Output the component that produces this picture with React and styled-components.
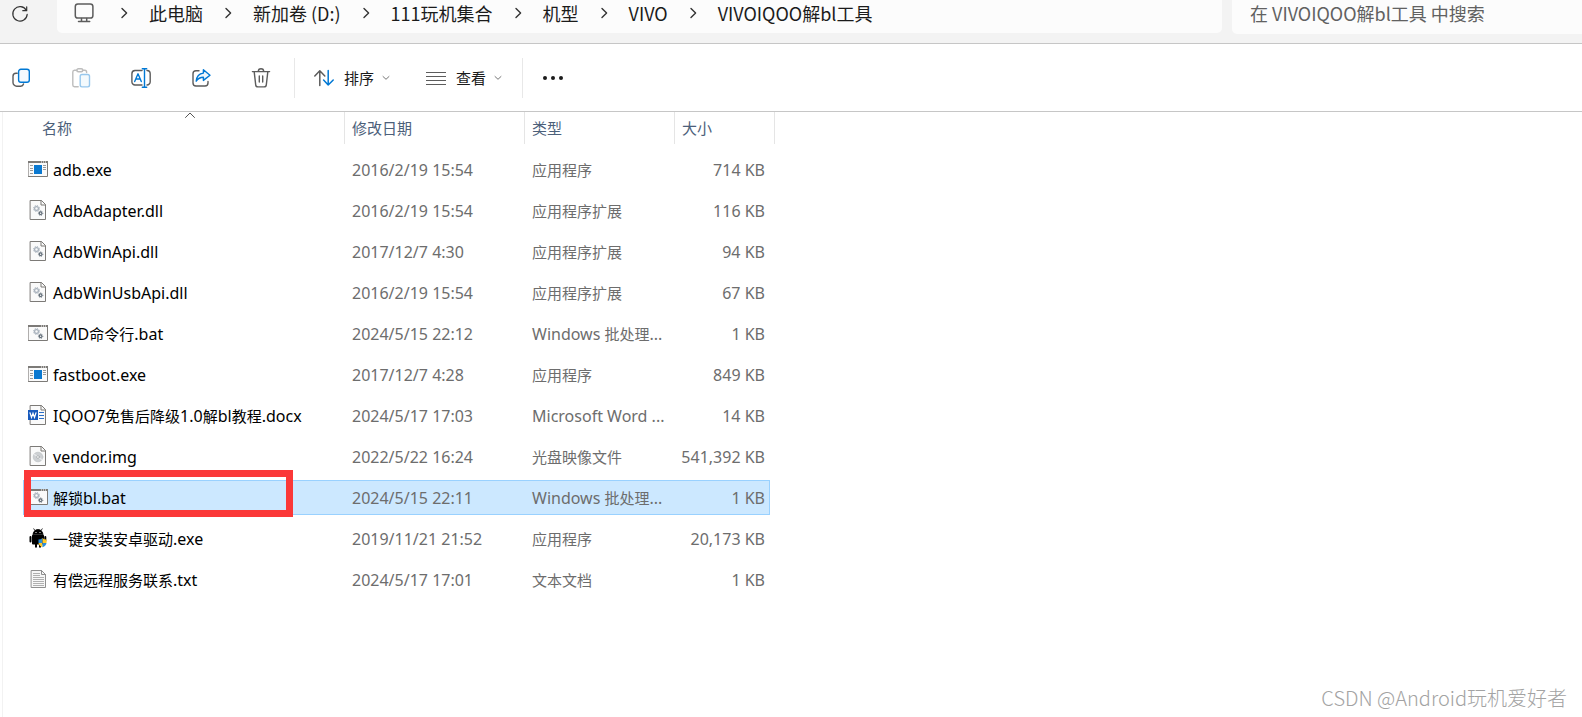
import React from "react";
import styled, { createGlobalStyle } from "styled-components";

const GlobalStyle = createGlobalStyle`
  *, *::before, *::after { box-sizing: border-box; }
  body {
    margin: 0;
    background: #ffffff;
    color: #000000;
    font-family: "Noto Sans", "Noto Sans CJK SC", sans-serif;
    font-size: 15px;
  }
  button, input { font: inherit; color: inherit; margin: 0; }
  svg { display: block; flex: none; }
`;

const Window = styled.div`
  display: flex;
  flex-direction: column;
  min-height: 100vh;
`;

const AddressRow = styled.header`
  display: flex;
  align-items: flex-start;
  gap: 10px;
  height: 44px;
  background: #f3f3f3;
  border-bottom: 1px solid #c6c6c6;
  font-family: "Noto Sans CJK SC", sans-serif;
  font-size: 18px;
`;

const PlainButton = styled.button`
  display: flex;
  align-items: center;
  justify-content: center;
  padding: 0;
  border: 0;
  background: transparent;
`;

const RefreshButton = styled(PlainButton)`
  width: 39px;
  height: 27px;
  margin-right: 8px;
`;

const AddressBox = styled.nav`
  flex: 1;
  display: flex;
  align-items: center;
  gap: 21px;
  height: 33px;
  padding: 0 17px 8px;
  border-radius: 0 0 5px 5px;
  background: #fcfcfc;
`;

const Device = styled.span`
  margin-right: 5px;
`;

const Crumb = styled.a`
  color: #1b1b1b;
  line-height: 24px;
  text-decoration: none;
  white-space: nowrap;
`;

const SearchBox = styled.input`
  width: 350px;
  height: 34px;
  padding: 0 18px 8px;
  border: 0;
  border-radius: 0 0 0 5px;
  background: #fcfcfc;
  outline: 0;
  &::placeholder { color: #616161; opacity: 1; }
`;

const Toolbar = styled.div`
  display: flex;
  align-items: center;
  height: 68px;
  padding-left: 1px;
  border-bottom: 1px solid #c6c6c6;
`;

const ToolGroup = styled.div`
  display: flex;
  gap: 20px;
`;

const ToolButton = styled(PlainButton)`
  width: 40px;
  height: 40px;
  opacity: ${(p) => (p.$faded ? 0.4 : 1)};
`;

const MenuButton = styled(PlainButton)`
  gap: 8px;
  height: 40px;
  color: #1b1b1b;
`;

const MenuLabel = styled.span`
  margin-left: 2px;
`;

const MenuGroup = styled.div`
  display: flex;
  gap: 36px;
  padding: 0 20px 0 19px;
`;

const Divider = styled.span`
  width: 1px;
  height: 40px;
  background: #e8e8e8;
  margin-left: ${(p) => p.$gap || 0}px;
`;

const Content = styled.main`
  flex: 1;
  display: flex;
  flex-direction: column;
  justify-content: space-between;
  margin-left: 2px;
  border-left: 1px solid #f2f2f2;
`;

const FileTable = styled.table`
  table-layout: fixed;
  width: 747px;
  margin: -6px 0 0 20px;
  border-collapse: separate;
  border-spacing: 0 6px;
  line-height: 20px;
`;

const Column = styled.col`
  width: ${(p) => p.$width}px;
`;

const HeadCell = styled.th`
  height: 34px;
  padding: 0;
  font-weight: 400;
  text-align: left;
  vertical-align: top;
`;

const HeadLabel = styled.div`
  position: relative;
  height: 32px;
  margin-left: ${(p) => (p.$first ? 12 : 0)}px;
  margin-right: ${(p) => (p.$last ? -5 : 0)}px;
  padding: 6px 7px 0;
  border-right: 1px solid #e5e5e5;
  color: #4c607a;
`;

const SortMark = styled.span`
  position: absolute;
  top: 0;
  left: 50%;
  transform: translateX(-50%);
`;

const Cell = styled.td`
  height: 35px;
  padding: 0 ${(p) => (p.$right ? 5 : 7)}px;
  color: #6d6d6d;
  font-size: 16px;
  text-align: ${(p) => (p.$right ? "right" : "left")};
  white-space: nowrap;
`;

const NameCell = styled(Cell)`
  position: relative;
  padding: 0 5px 2px;
  color: #000000;
`;

const Row = styled.tr`
  ${(p) =>
    p.$selected &&
    `
    td { background: #cce8ff; box-shadow: inset 0 1px #99d1ff, inset 0 -1px #99d1ff; }
    td:first-child { box-shadow: inset 0 1px #99d1ff, inset 0 -1px #99d1ff, inset 1px 0 #99d1ff; }
    td:last-child { box-shadow: inset 0 1px #99d1ff, inset 0 -1px #99d1ff, inset -1px 0 #99d1ff; }
  `}
`;

const FileName = styled.div`
  display: flex;
  align-items: center;
  gap: 5px;
`;

const FileLabel = styled.span`
  padding-top: 2px;
`;

const Han = styled.span`
  font-size: 15px;
`;

const RedFrame = styled.span`
  position: absolute;
  top: -10px;
  left: 1px;
  width: 269px;
  height: 47px;
  border: 7px solid #fb3838;
  pointer-events: none;
`;

const Watermark = styled.footer`
  padding: 0 15px 4px;
  color: #a3a3a3;
  font-family: "Noto Sans CJK SC", sans-serif;
  font-size: 20px;
  font-weight: 300;
  line-height: 30px;
  text-align: right;
`;

const GREY = "#5c5c5c";
const BLUE = "#0078d4";

function Icon({ children, size = 20, height, ...rest }) {
  return (
    <svg
      width={size}
      height={height || size}
      viewBox={`0 0 ${size} ${height || size}`}
      fill="none"
      strokeLinecap="round"
      strokeLinejoin="round"
      aria-hidden="true"
      {...rest}
    >
      {children}
    </svg>
  );
}

const RefreshIcon = () => (
  <Icon size={18} stroke="#333" strokeWidth="1.2">
    <path d="M15.2 5.2A7.2 7.2 0 1 0 16.2 9.4M15.7 1.8v3.9h-3.9" />
  </Icon>
);

const MonitorIcon = () => (
  <Icon stroke={GREY} strokeWidth="1.5">
    <rect x="1.3" y="1" width="17.6" height="14" rx="2.6" />
    <path d="M7.5 15.4v3M12.7 15.4v3M4.5 18.6h11.2" />
  </Icon>
);

const CrumbArrow = () => (
  <Icon size={8} height={12} stroke="#333" strokeWidth="1.4">
    <path d="M2 1.5 6.6 6 2 10.5" />
  </Icon>
);

const SmallCaret = () => (
  <Icon size={8} stroke="#777" strokeWidth="1">
    <path d="M1 2.5 4 5.3 7 2.5" />
  </Icon>
);

const CopyIcon = () => (
  <Icon strokeWidth="1.4">
    <path d="M6.2 5.2H5A3 3 0 0 0 2 8.2v6.3A3.7 3.7 0 0 0 5.7 18.2h4A3 3 0 0 0 12.500 16" stroke={GREY} />
    <rect x="7.6" y="1.300" width="10.700" height="13" rx="2.300" stroke={BLUE} fill="#f3f9fe" />
  </Icon>
);

const PasteIcon = () => (
  <Icon strokeWidth="1.4">
    <path d="M6 2.200H3.500A1.800 1.800 0 0 0 1.800 4v13a1.800 1.800 0 0 0 1.700 1.800h3.700M11.500 2.200h2.300A1.800 1.800 0 0 1 15.600 4v.6" stroke={GREY} />
    <rect x="5.800" y=".8" width="6" height="3" rx="1.500" stroke={GREY} />
    <rect x="9.200" y="6.500" width="9.300" height="12.400" rx="1.800" stroke={BLUE} fill="#e6f3fc" />
  </Icon>
);

const RenameIcon = () => (
  <Icon strokeWidth="1.4">
    <path d="M11 2.500H4A3.200 3.200 0 0 0 .9 5.700v8A3.200 3.200 0 0 0 4 17h7M16 2.500a3.200 3.200 0 0 1 3.200 3.200v8A3.200 3.200 0 0 1 16 17" stroke={GREY} />
    <path d="M13.500.8v18.400M11.300.8h4.400M11.300 19.200h4.400M3.700 13.500 7 5.800l3.300 7.700M4.800 11h4.400" stroke={BLUE} />
  </Icon>
);

const ShareIcon = () => (
  <Icon strokeWidth="1.4">
    <path d="M8 2.800H5A3 3 0 0 0 2 5.800V15a3 3 0 0 0 3 3h9a3 3 0 0 0 3-3v-1.500" stroke={GREY} />
    <path d="M12.400 1.800 19 7.200l-6.600 5.200V9.300C9 9.300 7 10.500 5.200 13.200 5.600 8.500 8 5.500 12.400 5.100Z" stroke={BLUE} fill="#eef7fd" />
  </Icon>
);

const TrashIcon = () => (
  <Icon stroke={GREY} strokeWidth="1.4">
    <path d="M1.400 3.600h17.200M7.300 3.400a2.700 2.700 0 0 1 5.400 0M3.200 3.800l1.500 13.100a2.200 2.200 0 0 0 2.200 2h6.200a2.200 2.200 0 0 0 2.200-2l1.500-13.100M8.300 8v6M11.700 8v6" />
  </Icon>
);

const SortIcon = () => (
  <Icon strokeWidth="1.500">
    <path d="M5.800 17.500V3M.8 8l5-5.200 5 5.200" stroke={GREY} />
    <path d="M14.200 2.500V17M9.600 12l4.600 5 5-5" stroke={BLUE} />
  </Icon>
);

const ViewIcon = () => (
  <Icon stroke={GREY} strokeWidth="1.200" strokeLinecap="butt">
    <path d="M0 4.500h20M0 8.500h20M0 12.500h20M0 16.500h20" />
  </Icon>
);

const MoreIcon = () => (
  <Icon size={22} fill="#1b1b1b">
    <circle cx="3" cy="11" r="2" />
    <circle cx="11" cy="11" r="2" />
    <circle cx="19" cy="11" r="2" />
  </Icon>
);

const Gears = () => (
  <>
    <circle cx="8.500" cy="8.500" r="1.900" stroke="#a5afba" strokeWidth="1.200" />
    <circle cx="8.500" cy="8.500" r="3" stroke="#a5afba" strokeWidth="1" strokeDasharray="1.200 1.156" strokeLinecap="butt" />
    <circle cx="12.600" cy="13.200" r="1.300" stroke="#5f6b76" strokeWidth="1.100" />
    <circle cx="12.600" cy="13.200" r="2.200" stroke="#5f6b76" strokeWidth=".9" strokeDasharray=".9 .828" strokeLinecap="butt" />
  </>
);

const Page = ({ children }) => (
  <Icon strokeLinejoin="miter">
    <path d="M2.500.5h11l4 4v15h-15z" fill="#fafafa" stroke="#7c7a77" />
    <path d="M13 .5v4.500h4.500" stroke="#7c7a77" />
    {children}
  </Icon>
);

const Frame = ({ children }) => (
  <Icon strokeLinejoin="miter">
    <path d="M.5 2.500h19v15H.5z" fill="#fafafa" stroke="#7c7a77" />
    <path d="M0 3h20" stroke="#7c7a77" strokeWidth="2" strokeLinecap="butt" />
    <path d="M13 3h1M15 3h1M17 3h1" stroke="#fff" strokeLinecap="butt" />
    {children}
  </Icon>
);

const fileIcons = {
  exe: () => (
    <Frame>
      <path d="M2 6.500h3M2 9.500h3M2 11.500h3M2 14.500h3M15 6.500h3M15 8.500h3M15 10.500h3" stroke="#9a9a9a" strokeLinecap="butt" />
      <path d="M6 6h8v9H6z" fill="#0a78d0" />
    </Frame>
  ),
  dll: () => (
    <Page>
      <Gears />
    </Page>
  ),
  bat: () => (
    <Frame>
      <Gears />
    </Frame>
  ),
  docx: () => (
    <Page>
      <path d="M11 7.500h5M11 10.500h5M11 13.500h5" stroke="#2b6fc8" strokeLinecap="butt" />
      <path d="M0 5h10v10H0z" fill="#185abd" />
      <path d="m2 7.800 1.500 4.600L5 8.200l1.500 4.200L8 7.800" stroke="#fff" strokeWidth="1.200" />
    </Page>
  ),
  img: () => (
    <Page>
      <circle cx="10" cy="11" r="4.800" fill="#cdd0d3" stroke="#c2c5c8" strokeWidth=".8" />
      <path d="M10 11 6.500 8.500M10 11l3.500 2.500" stroke="#e6e8ea" strokeWidth="1.500" />
      <circle cx="10" cy="11" r="1.400" fill="#fff" stroke="#a5a8ab" strokeWidth=".8" />
    </Page>
  ),
  android: () => (
    <Icon>
      <path d="M5 6.500a5 5 0 0 1 10 0zM5.800.8l1.600 2.400M14.200.8l-1.600 2.400" fill="#000" stroke="#000" strokeWidth=".8" />
      <path d="M5 7.800h10v7.700H5zM2.500 9v4.500M17.300 9v4M8 15v3.800M12 15v3.800" fill="#000" stroke="#000" strokeWidth="2" />
      <path d="M7.500 4.500h1M11.500 4.500h1" stroke="#fff" strokeLinecap="butt" />
      <path d="M10.500 11.500Q13 11.500 14.500 10v5h-4z" fill="#2a8ddb" />
      <path d="M14.500 10q1.500 1.500 4 1.500V15h-4z" fill="#ffc928" />
      <path d="M10.500 15h4v4.300q-3.600-1.500-4-4.300z" fill="#ffc928" />
      <path d="M14.500 15h4q-.4 2.800-4 4.300z" fill="#2a8ddb" />
    </Icon>
  ),
  txt: () => (
    <Icon strokeLinejoin="miter">
      <path d="M3.500 1.500h10l4 4v13h-14z" fill="#f7f7f7" stroke="#8f8f8f" />
      <path d="M13.500 1.500v4h4" stroke="#8f8f8f" />
      <path d="M5 4.500h7M5 6.500h7M5 8.500h11M5 10.500h11M5 12.500h11M5 14.500h11M5 16.500h11" stroke="#b0b0b0" strokeLinecap="butt" />
    </Icon>
  ),
};

const crumbs = ["此电脑", "新加卷 (D:)", "111玩机集合", "机型", "VIVO", "VIVOIQOO解bl工具"];

const tools = [
  { label: "复制", icon: CopyIcon },
  { label: "粘贴", icon: PasteIcon, faded: true },
  { label: "重命名", icon: RenameIcon },
  { label: "共享", icon: ShareIcon },
  { label: "删除", icon: TrashIcon },
];

const columns = [
  { title: "名称", width: 322 },
  { title: "修改日期", width: 180 },
  { title: "类型", width: 150 },
  { title: "大小", width: 95 },
];

const files = [
  { icon: "exe", name: "adb.exe", date: "2016/2/19 15:54", type: "应用程序", size: "714 KB" },
  { icon: "dll", name: "AdbAdapter.dll", date: "2016/2/19 15:54", type: "应用程序扩展", size: "116 KB" },
  { icon: "dll", name: "AdbWinApi.dll", date: "2017/12/7 4:30", type: "应用程序扩展", size: "94 KB" },
  { icon: "dll", name: "AdbWinUsbApi.dll", date: "2016/2/19 15:54", type: "应用程序扩展", size: "67 KB" },
  { icon: "bat", name: "CMD命令行.bat", date: "2024/5/15 22:12", type: "Windows 批处理...", size: "1 KB" },
  { icon: "exe", name: "fastboot.exe", date: "2017/12/7 4:28", type: "应用程序", size: "849 KB" },
  { icon: "docx", name: "IQOO7免售后降级1.0解bl教程.docx", date: "2024/5/17 17:03", type: "Microsoft Word ...", size: "14 KB" },
  { icon: "img", name: "vendor.img", date: "2022/5/22 16:24", type: "光盘映像文件", size: "541,392 KB" },
  { icon: "bat", name: "解锁bl.bat", date: "2024/5/15 22:11", type: "Windows 批处理...", size: "1 KB", selected: true },
  { icon: "android", name: "一键安装安卓驱动.exe", date: "2019/11/21 21:52", type: "应用程序", size: "20,173 KB" },
  { icon: "txt", name: "有偿远程服务联系.txt", date: "2024/5/17 17:01", type: "文本文档", size: "1 KB" },
];

// Han characters are set one step smaller than the Latin text around them.
function MixedText({ text }) {
  return text
    .split(/([\u4e00-\u9fff]+)/)
    .map((run, i) => (i % 2 ? <Han key={i}>{run}</Han> : run));
}

function FileRow({ file }) {
  const FileIcon = fileIcons[file.icon];
  return (
    <Row $selected={file.selected} aria-selected={Boolean(file.selected)}>
      <NameCell>
        <FileName>
          <FileIcon />
          <FileLabel>
            <MixedText text={file.name} />
          </FileLabel>
        </FileName>
        {file.selected && <RedFrame />}
      </NameCell>
      <Cell>{file.date}</Cell>
      <Cell>
        <MixedText text={file.type} />
      </Cell>
      <Cell $right>{file.size}</Cell>
    </Row>
  );
}

export default function App() {
  return (
    <Window>
      <GlobalStyle />
      <AddressRow>
        <RefreshButton type="button" aria-label="刷新">
          <RefreshIcon />
        </RefreshButton>
        <AddressBox aria-label="路径">
          <Device>
            <MonitorIcon />
          </Device>
          {crumbs.map((text) => (
            <React.Fragment key={text}>
              <CrumbArrow />
              <Crumb href="#">{text}</Crumb>
            </React.Fragment>
          ))}
        </AddressBox>
        <SearchBox type="text" aria-label="搜索" placeholder="在 VIVOIQOO解bl工具 中搜索" />
      </AddressRow>

      <Toolbar role="toolbar">
        <ToolGroup>
          {tools.map(({ label, icon: ToolIcon, faded }) => (
            <ToolButton key={label} type="button" aria-label={label} $faded={faded}>
              <ToolIcon />
            </ToolButton>
          ))}
        </ToolGroup>
        <Divider $gap={13} />
        <MenuGroup>
          <MenuButton type="button">
            <SortIcon />
            <MenuLabel>排序</MenuLabel>
            <SmallCaret />
          </MenuButton>
          <MenuButton type="button">
            <ViewIcon />
            <MenuLabel>查看</MenuLabel>
            <SmallCaret />
          </MenuButton>
        </MenuGroup>
        <Divider />
        <MenuGroup>
          <MenuButton type="button" aria-label="更多">
            <MoreIcon />
          </MenuButton>
        </MenuGroup>
      </Toolbar>

      <Content>
        <FileTable>
          <colgroup>
            {columns.map((c) => (
              <Column key={c.title} $width={c.width} />
            ))}
          </colgroup>
          <thead>
            <tr>
              {columns.map((c, i) => (
                <HeadCell key={c.title} scope="col">
                  <HeadLabel $first={i === 0} $last={i === columns.length - 1}>
                    {c.title}
                    {i === 0 && (
                      <SortMark>
                        <Icon size={11} height={7} stroke="#555" strokeWidth="1">
                          <path d="M1 5.500 5.500 1 10 5.500" />
                        </Icon>
                      </SortMark>
                    )}
                  </HeadLabel>
                </HeadCell>
              ))}
            </tr>
          </thead>
          <tbody>
            {files.map((file) => (
              <FileRow key={file.name} file={file} />
            ))}
          </tbody>
        </FileTable>
        <Watermark>CSDN @Android玩机爱好者</Watermark>
      </Content>
    </Window>
  );
}
